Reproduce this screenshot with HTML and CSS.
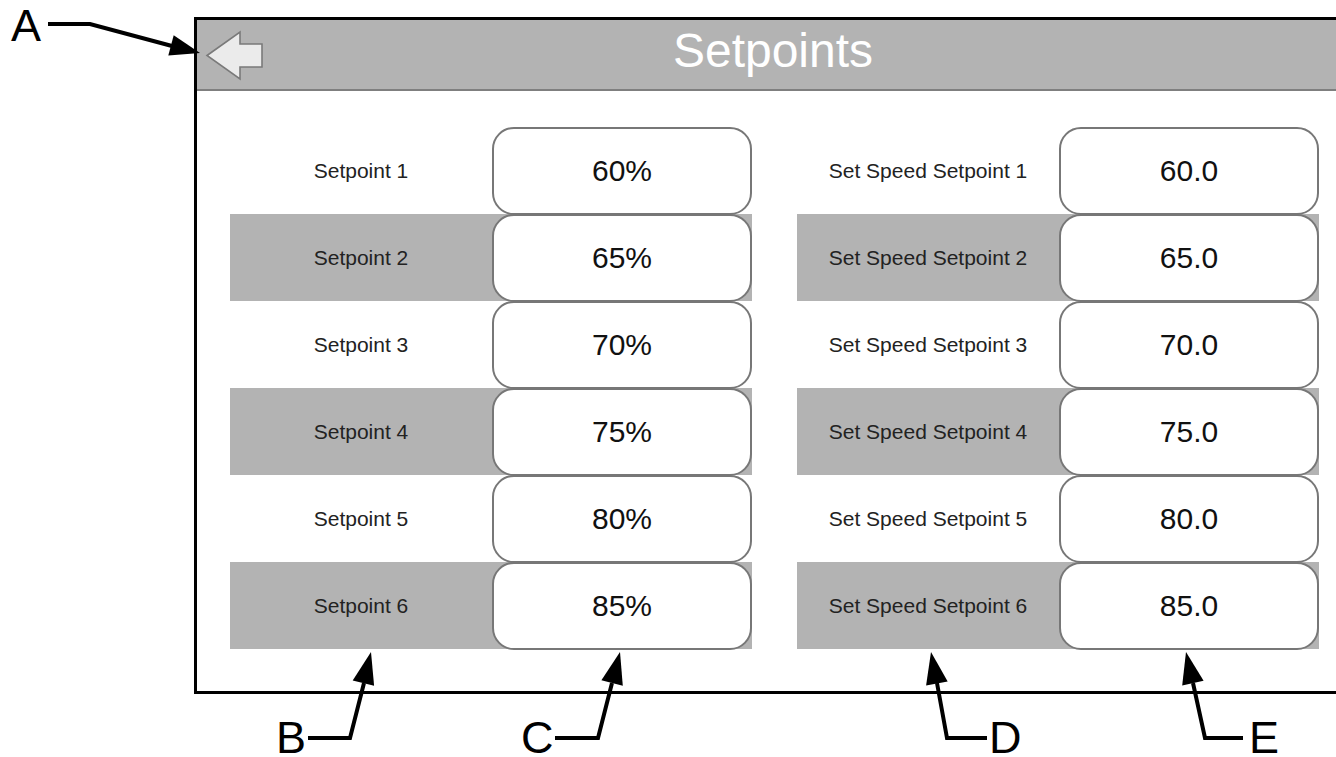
FILE: index.html
```html
<!DOCTYPE html>
<html lang="en">
<head>
    <meta charset="UTF-8">
    <meta name="viewport" content="width=device-width, initial-scale=1.0">
    <title>Setpoints</title>
    <link rel="stylesheet" href="styles.css">
</head>
<body>
    <div class="screen">
        <div class="header">
            <button class="back" aria-label="Back">
                <svg width="60" height="52" viewBox="0 0 60 52">
                    <polygon points="2,25.5 35,2 35,14 57,14 57,37 35,37 35,49" fill="#ebebeb" stroke="#7a7a7a" stroke-width="1.6" stroke-linejoin="miter"/>
                </svg>
            </button>
            <h1 class="title">Setpoints</h1>
            <span></span>
        </div>

        <div class="panels">
            <div class="panel">
                <div class="row"><span class="label">Setpoint 1</span><span class="value">60%</span></div>
                <div class="row alt"><span class="label">Setpoint 2</span><span class="value">65%</span></div>
                <div class="row"><span class="label">Setpoint 3</span><span class="value">70%</span></div>
                <div class="row alt"><span class="label">Setpoint 4</span><span class="value">75%</span></div>
                <div class="row"><span class="label">Setpoint 5</span><span class="value">80%</span></div>
                <div class="row alt"><span class="label">Setpoint 6</span><span class="value">85%</span></div>
            </div>
            <div class="panel">
                <div class="row"><span class="label">Set Speed Setpoint 1</span><span class="value">60.0</span></div>
                <div class="row alt"><span class="label">Set Speed Setpoint 2</span><span class="value">65.0</span></div>
                <div class="row"><span class="label">Set Speed Setpoint 3</span><span class="value">70.0</span></div>
                <div class="row alt"><span class="label">Set Speed Setpoint 4</span><span class="value">75.0</span></div>
                <div class="row"><span class="label">Set Speed Setpoint 5</span><span class="value">80.0</span></div>
                <div class="row alt"><span class="label">Set Speed Setpoint 6</span><span class="value">85.0</span></div>
            </div>
        </div>
    </div>

    <!-- callouts drawn over the screen -->
    <svg class="notes" width="1336" height="757" viewBox="0 0 1336 757">
        <g fill="none" stroke="#000" stroke-width="4" stroke-linejoin="miter">
            <polyline points="48,24 90,24 172,46"/>
            <polyline points="308,738 350,738 364,683"/>
            <polyline points="555,738 598,738 612,683"/>
            <polyline points="987,738 947,738 937,683"/>
            <polyline points="1243,738 1205,738 1193,683"/>
        </g>
        <g fill="#000">
            <polygon points="200,53 168.3,55.6 173.7,35.2"/>
            <polygon points="371,652 374.1,685.7 352.7,680.5"/>
            <polygon points="620,652 622.8,685.7 601.4,680.3"/>
            <polygon points="931,652 947.7,681.5 926.1,685.5"/>
            <polygon points="1186,652 1203.6,680.8 1182.2,685.6"/>
        </g>
        <g class="letters">
            <text x="11" y="41">A</text>
            <text x="276" y="753">B</text>
            <text x="521" y="753">C</text>
            <text x="989" y="753">D</text>
            <text x="1249" y="753">E</text>
        </g>
    </svg>
</body>
</html>
```
FILE: styles.css
```css
body {
    margin: 0;
    position: relative;
    width: 1336px;
    height: 757px;
    overflow: hidden;
    background: #fff;
    font-family: "Liberation Sans", Arial, sans-serif;
}
.screen {
    box-sizing: border-box;
    width: 1158px;
    height: 677px;
    margin: 17px 0 0 194px;
    border: 3px solid #000;
}
.header {
    display: grid;
    grid-template-columns: 1fr auto 1fr;
    height: 69px;
    background: #b3b3b3;
    border-bottom: 2px solid #7f7f7f;
}
.back {
    justify-self: start;
    align-self: start;
    margin: 10px 0 0 8px;
    padding: 0;
    border: none;
    background: none;
    line-height: 0;
    cursor: pointer;
}
.title {
    margin: 0;
    font-size: 48px;
    font-weight: normal;
    line-height: 62px;
    color: #fff;
}
.panels {
    display: flex;
    gap: 45px;
    padding: 36px 0 0 33px;
}
.row {
    display: grid;
    grid-template-columns: 262px 260px;
    height: 87px;
}
.row.alt {
    background: #b3b3b3;
}
.label {
    display: flex;
    align-items: center;
    justify-content: center;
    font-size: 21px;
    color: #222;
}
.value {
    box-sizing: border-box;
    display: flex;
    align-items: center;
    justify-content: center;
    height: 88px;
    background: #fff;
    border: 2px solid #777;
    border-radius: 22px;
    font-size: 30px;
    color: #111;
}
.notes {
    position: absolute;
    top: 0;
    left: 0;
    pointer-events: none;
}
.letters text {
    font-family: "Liberation Sans", Arial, sans-serif;
    font-size: 45px;
    fill: #000;
}
```
